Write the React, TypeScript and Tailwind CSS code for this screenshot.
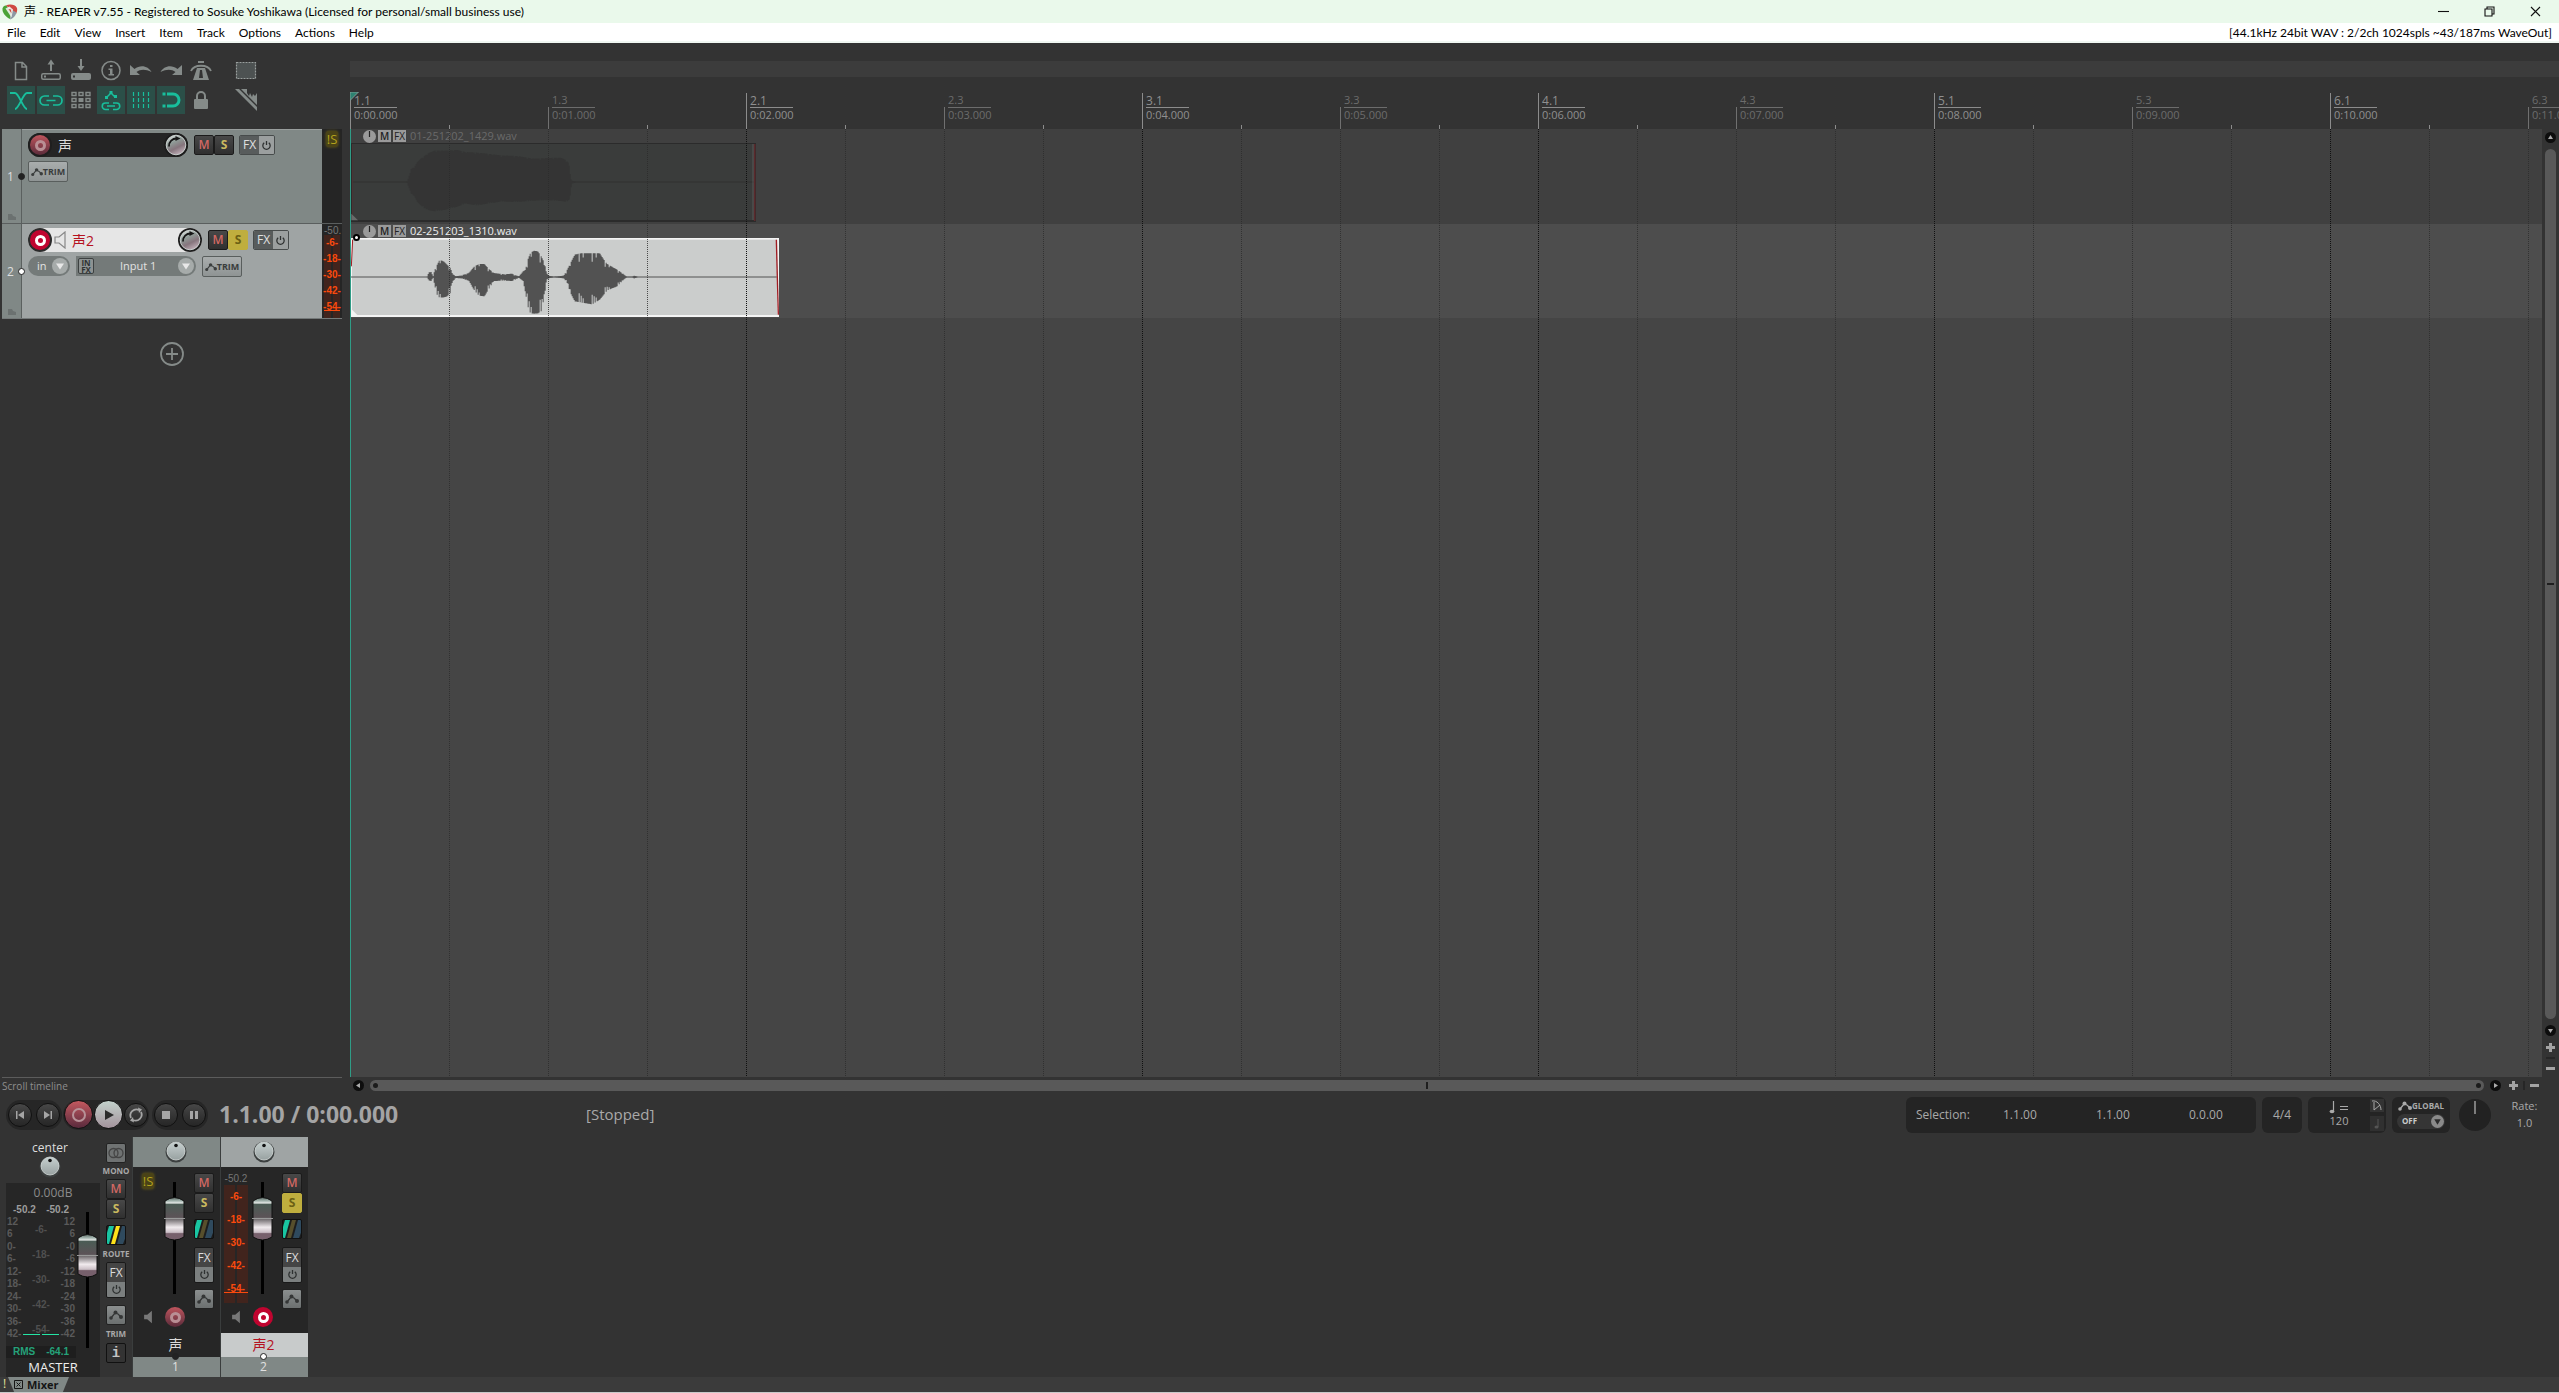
import clsx from 'clsx';
import type { ReactNode } from 'react';

const menus = ['File', 'Edit', 'View', 'Insert', 'Item', 'Track', 'Options', 'Actions', 'Help'];

// one entry per half-beat grid step
const gridSteps = Array.from({ length: 23 }, (_, i) => i);

type EnvelopePoint = [x: number, top: number, bottom: number];

const firstTake: EnvelopePoint[] = [
  [200, 306, 309], [206, 288, 326], [212, 268, 342], [222, 262, 350], [230, 248, 366],
  [240, 238, 376], [252, 229, 387], [265, 220, 392], [285, 212, 395], [310, 213, 391],
  [350, 211, 381], [375, 217, 372], [410, 219, 377], [440, 222, 372], [480, 227, 366],
  [530, 229, 367], [580, 237, 363], [620, 235, 362], [660, 234, 364], [674, 240, 366],
  [685, 250, 364], [690, 290, 345], [693, 303, 312], [704, 306, 309],
];

const secondTake: EnvelopePoint[] = [
  [260, 591, 593], [265, 578, 602], [272, 577, 604], [278, 590, 594], [283, 570, 620],
  [290, 555, 645], [297, 541, 654], [310, 545, 653], [320, 555, 650], [330, 565, 640],
  [335, 580, 610], [345, 590, 595], [360, 588, 596], [385, 580, 603], [400, 562, 630],
  [415, 553, 648], [432, 553, 650], [445, 568, 628], [460, 580, 604], [490, 584, 603],
  [515, 582, 604], [525, 587, 600], [535, 590, 594], [548, 575, 604], [555, 570, 640],
  [562, 540, 680], [570, 520, 701], [580, 513, 702], [592, 515, 701], [602, 530, 695],
  [612, 550, 650], [618, 580, 600], [625, 588, 596], [640, 591, 593], [670, 588, 596],
  [680, 570, 610], [690, 550, 640], [703, 525, 665], [720, 521, 668], [755, 521, 674],
  [778, 521, 660], [790, 540, 645], [800, 553, 632], [830, 570, 620], [850, 584, 600],
  [858, 591, 593], [875, 591, 593], [882, 588, 597], [890, 591, 593],
];

// every few columns a peak is pulled back towards the centre line
const wavePath = (points: EnvelopePoint[], center: number, jag: number) => {
  const top: string[] = [];
  const bottom: string[] = [];
  for (let x = points[0][0]; x <= points[points.length - 1][0]; x += 3) {
    const next = Math.max(1, points.findIndex((p) => p[0] >= x));
    const a = points[next - 1];
    const b = points[next];
    const t = (x - a[0]) / (b[0] - a[0]);
    const noise = (x * 7919) % 13;
    const pull = noise < 3 ? 1 - jag * (0.5 + noise / 4) : 1;
    const up = center - (center - (a[1] + (b[1] - a[1]) * t)) * (noise % 2 ? 1 : pull);
    const down = center + (a[2] + (b[2] - a[2]) * t - center) * pull;
    top.push(`${x},${up.toFixed(1)} ${x + 3},${up.toFixed(1)}`);
    bottom.unshift(`${x + 3},${down.toFixed(1)} ${x},${down.toFixed(1)}`);
  }
  return `M${top.join(' L')} L${bottom.join(' L')} Z`;
};

const toolbarTop = [
  {
    label: 'New project',
    icon: <path d="M8.500 5.500h7l4 4v13h-11z M15 6v4h4" fill="none" stroke="currentColor" strokeWidth="1.500" />,
  },
  {
    label: 'Open project',
    icon: (
      <>
        <path d="M14 14V6" fill="none" stroke="currentColor" strokeWidth="2" />
        <path d="M14 2.500l3.500 5h-7z" fill="currentColor" />
        <rect x="4.750" y="16.750" width="18.500" height="5.500" rx="1.500" fill="none" stroke="currentColor" strokeWidth="1.500" />
        <path d="M7 18.500h2v2H7z" fill="currentColor" />
      </>
    ),
  },
  {
    label: 'Save project',
    icon: (
      <>
        <path d="M14 2v8" fill="none" stroke="currentColor" strokeWidth="2" />
        <path d="M14 14l3.500-5h-7z" fill="currentColor" />
        <rect x="4" y="16" width="20" height="7" rx="2" fill="currentColor" />
        <path d="M6 18.500h2v2H6z" fill="#333" />
      </>
    ),
  },
  {
    label: 'Project settings',
    icon: (
      <>
        <circle cx="14" cy="13.500" r="9" fill="none" stroke="currentColor" strokeWidth="1.500" />
        <path d="M13 8h2.500v2H13zM11.500 11.500h4V17h1.500v1.500h-5.500V17h1.500v-4h-1.500z" fill="currentColor" />
      </>
    ),
  },
  {
    label: 'Undo',
    icon: <path d="M3 8v10h10l-3.500-3c4-3 9-3 15 0-3-6-11-8-17-3z" fill="currentColor" />,
  },
  {
    label: 'Redo',
    icon: <path d="M25 8v10H15l3.500-3c-4-3-9-3-15 0 3-6 11-8 17-3z" fill="currentColor" />,
  },
  {
    label: 'Metronome',
    icon: (
      <>
        <path d="M11 4h6v2h-6zM10 11h8l4 12H6z" fill="currentColor" />
        <path d="M4 14c3-7 17-7 20 0" fill="none" stroke="currentColor" strokeWidth="1.800" />
        <path d="M13 13h2l1 8h-4z" fill="#333" />
      </>
    ),
  },
];

const toolbarBottom = [
  {
    label: 'Auto-crossfade',
    active: true,
    icon: <path d="M3 7h5c4 0 8 16 12 16M25 7h-5c-4 0-8 16-12 16" fill="none" stroke="currentColor" strokeWidth="1.800" />,
  },
  {
    label: 'Item grouping',
    active: true,
    icon: (
      <path
        d="M12 10H7.500a4.500 4.500 0 0 0 0 9H12M16 10h4.500a4.500 4.500 0 0 1 0 9H16M9.500 14.500h9"
        fill="none"
        stroke="currentColor"
        strokeWidth="1.700"
      />
    ),
  },
  {
    label: 'Ripple editing',
    active: false,
    icon: (
      <>
        <path
          d="M5 6.500h4v3H5zM12 6.500h4v3h-4zM19 6.500h4v3h-4zM5 12.500h4v3H5zM19 12.500h4v3h-4zM5 18.500h4v3H5zM12 18.500h4v3h-4zM19 18.500h4v3h-4z"
          fill="none"
          stroke="currentColor"
          strokeWidth="1.400"
        />
        <path d="M11.500 12h5v4h-5z" fill="currentColor" />
      </>
    ),
  },
  {
    label: 'Envelopes move with items',
    active: true,
    icon: (
      <>
        <path d="M9 12l5-5 4 4" fill="none" stroke="currentColor" strokeWidth="1.500" />
        <path d="M8 10h3v3H8zM12.500 5h3v3h-3zM17 9h3v3h-3z" fill="currentColor" />
        <path
          d="M12 17H8.500a3 3 0 0 0 0 6.500H12M16 17h3.500a3 3 0 0 1 0 6.500H16M10 20h8"
          fill="none"
          stroke="currentColor"
          strokeWidth="1.600"
        />
      </>
    ),
  },
  {
    label: 'Grid lines',
    active: true,
    icon: (
      <path
        d="M6.500 6v17M11.500 6v17M16.500 6v17M21.500 6v17"
        fill="none"
        stroke="currentColor"
        strokeWidth="1.200"
        strokeDasharray="4 2"
      />
    ),
  },
  {
    label: 'Snap',
    active: true,
    icon: (
      <>
        <path d="M10 8h6a6 6 0 0 1 0 12h-6" fill="none" stroke="currentColor" strokeWidth="3" />
        <path d="M5.500 6.500h3v3h-3zM5.500 18.500h3v3h-3z" fill="currentColor" />
      </>
    ),
  },
  {
    label: 'Locking',
    active: false,
    icon: (
      <>
        <path d="M10 14v-4a4 4 0 0 1 8 0v4" fill="none" stroke="currentColor" strokeWidth="2" />
        <rect x="7" y="13" width="14" height="10" rx="1" fill="currentColor" />
      </>
    ),
  },
];

const Knob = ({ className }: { className?: string }) => (
  <svg viewBox="0 0 24 24" className={clsx('shrink-0', className)} aria-hidden="true">
    <defs>
      <linearGradient id="knob" x1="0.200" y1="0" x2="0.700" y2="1">
        <stop offset="0" stopColor="#dfe5e2" />
        <stop offset="0.350" stopColor="#8f9b97" />
        <stop offset="0.650" stopColor="#86757d" />
        <stop offset="1" stopColor="#c4b3bc" />
      </linearGradient>
    </defs>
    <circle cx="12" cy="12" r="12" fill="#1d1d1d" />
    <circle cx="12" cy="12" r="9.800" fill="url(#knob)" stroke="#d3d9d7" strokeWidth="0.900" />
    <path d="M5 13.500a7.500 7.500 0 0 1 8-8" fill="none" stroke="#161616" strokeWidth="1.800" />
    <path d="M11.500 3l5 2.500-5 2.500z" fill="#161616" />
  </svg>
);

const PanKnob = () => (
  <svg viewBox="0 0 22 24" className="h-6 w-[22px] shrink-0" aria-hidden="true">
    <defs>
      <linearGradient id="pan" x1="0" y1="0" x2="0" y2="1">
        <stop offset="0" stopColor="#c6d0cf" />
        <stop offset="1" stopColor="#98a1a1" />
      </linearGradient>
    </defs>
    <circle cx="11" cy="12" r="10.500" fill="#3c4040" />
    <circle cx="11" cy="11" r="9" fill="url(#pan)" stroke="#d6dcdb" strokeWidth="0.800" />
    <circle cx="11" cy="5.500" r="1.800" fill="#111" />
  </svg>
);

const RecordButton = ({ armed, className }: { armed?: boolean; className?: string }) => (
  <button
    type="button"
    aria-label="Record arm"
    className={clsx(
      'flex shrink-0 items-center justify-center rounded-full',
      armed ? 'border-[#2b2b2b] bg-[#c0042f]' : 'border-[#1f1f1f] bg-linear-to-b from-[#c0555d] to-[#5c2c3b]',
      className,
    )}
  >
    <span className={clsx('size-[11px] rounded-full border-[3px]', armed ? 'border-white' : 'border-[#b98f95]')} />
  </button>
);

const PowerIcon = () => (
  <svg viewBox="0 0 12 12" className="size-[11px]" aria-hidden="true">
    <path d="M3.500 3a4 4 0 1 0 5 0M6 1v4.500" fill="none" stroke="#2e3131" strokeWidth="1.400" />
  </svg>
);

const EnvelopeIcon = ({ className }: { className?: string }) => (
  <svg viewBox="0 0 14 10" className={clsx('h-[10px] shrink-0', className ?? 'w-[14px]')} aria-hidden="true">
    <path d="M2 8l4-5 3 1 3 3" fill="none" stroke="currentColor" strokeWidth="1.300" />
    <circle cx="2" cy="8" r="1.800" fill="currentColor" />
    <circle cx="6.500" cy="2.500" r="2" fill="currentColor" />
    <circle cx="12" cy="7" r="2" fill="currentColor" />
  </svg>
);

const SpeakerIcon = ({ outline }: { outline?: boolean }) => (
  <svg viewBox="0 0 12 18" className={outline ? 'h-[18px] w-3' : 'h-[14px] w-[10px]'} aria-hidden="true">
    <path
      d="M1 6h4l6-5v16l-6-5H1z"
      fill={outline ? 'none' : '#777'}
      stroke={outline ? '#888' : 'none'}
      strokeWidth="1.200"
    />
  </svg>
);

const MuteButton = () => (
  <button
    type="button"
    className="h-5 w-5 rounded-[2px] border border-[#1b1b1b] bg-linear-to-b from-[#484848] to-[#303030] text-center text-[12px] leading-4 font-semibold text-[#d26863]"
  >
    M
  </button>
);

const SoloButton = ({ active }: { active?: boolean }) => (
  <button
    type="button"
    className={clsx(
      'h-5 w-5 rounded-[2px] border text-center text-[12px] leading-4 font-bold',
      active
        ? 'border-[#bfae3e] bg-[#bfae3e] text-[#6b6014]'
        : 'border-[#1b1b1b] bg-linear-to-b from-[#484848] to-[#303030] text-[#c9b95f]',
    )}
  >
    S
  </button>
);

const TrimButton = () => (
  <button
    type="button"
    className="flex h-[21px] w-10 items-center justify-center rounded-[2px] border border-[#595e5d] bg-linear-to-b from-[#a9adad] to-[#8f9494] text-[#3a3d3d]"
  >
    <EnvelopeIcon className="w-3" />
    <span className="text-[9px] font-bold">TRIM</span>
  </button>
);

const FxPair = () => (
  <div className="flex h-5 w-9 overflow-hidden rounded-[2px] border border-[#474b4b]">
    <button type="button" className="w-[19px] bg-[#585c5c] text-[12px] leading-4 text-[#e0e0e0]">
      FX
    </button>
    <button type="button" aria-label="FX bypass" className="flex flex-1 items-center justify-center bg-[#9b9f9f]">
      <PowerIcon />
    </button>
  </div>
);

const DownArrow = () => (
  <svg viewBox="0 0 18 18" className="pointer-events-none absolute top-px right-px size-[18px]" aria-hidden="true">
    <circle cx="9" cy="9" r="8" fill="#a6abaa" />
    <path d="M5 6.500h8l-4 6z" fill="#e8e8e8" />
  </svg>
);

const Soloed = () => (
  <span className="block rounded-[3px] bg-[#4a4317] px-px text-[13px] leading-4 text-[#b3a21c] shadow-[0_0_3px_#6b6018]">
    !S
  </span>
);

const TrackIndex = ({ index, selected }: { index: number; selected?: boolean }) => (
  <div className="relative w-[20px] shrink-0 border-r border-[#5b605f] bg-[#808886]">
    <span className="absolute top-[40px] left-[5px] text-[12px] leading-4 text-[#dedede]">{index}</span>
    <span
      className={clsx(
        'absolute top-[44px] -right-[4px] z-10 size-[7px] rounded-full border border-[#222]',
        selected ? 'bg-white' : 'bg-[#222]',
      )}
    />
    <svg viewBox="0 0 8 6" className="absolute bottom-[3px] left-[6px] h-[6px] w-2" aria-hidden="true">
      <path d="M0 0h4l1 2 3 1v3H0z" fill="#6b7170" />
    </svg>
  </div>
);

const Toolbar = () => (
  <div className="flex h-[86px] gap-4 pt-[14px] pl-[7px]">
    <div className="grid auto-rows-[28px] grid-cols-[repeat(7,28px)] gap-x-[2px] gap-y-px text-[#858b89]">
      {[...toolbarTop, ...toolbarBottom].map((tool) => (
        <button
          key={tool.label}
          type="button"
          aria-label={tool.label}
          className={clsx('size-7', 'active' in tool && tool.active && 'bg-[#2b4f48] text-[#18bf9c]')}
        >
          <svg viewBox="0 0 28 28" className="size-7" aria-hidden="true">
            {tool.icon}
          </svg>
        </button>
      ))}
    </div>
    <div className="flex flex-col gap-px">
      <button type="button" aria-label="Marquee select" className="size-7">
        <svg viewBox="0 0 28 28" className="size-7" aria-hidden="true">
          <rect x="5.500" y="5.500" width="19" height="16" fill="#4d5252" stroke="#9a9f9e" strokeWidth="1.200" strokeDasharray="2 1" />
        </svg>
      </button>
      <button type="button" aria-label="Draw" className="size-7">
        <svg viewBox="0 0 28 28" className="size-7" aria-hidden="true">
          <path d="M4 3l22 22v-4L8 3z" fill="#858b89" />
          <path d="M10 3l16 16V7l-2 3-2-2-1 3-2-4-1 3-2-3V3z" fill="#858b89" />
        </svg>
      </button>
    </div>
  </div>
);

const TrackPanels = () => (
  <div className="ml-[2px] w-[340px]">
    <div className="flex h-[95px] border-b border-[#5a5e5e]">
      <TrackIndex index={1} />
      <div className="flex-1 border-t border-[#999e9d] bg-[#808886] pt-[3px] pl-[6px]">
        <div className="flex h-6 items-center">
          <div className="mr-[6px] flex h-6 w-40 items-center rounded-full bg-[#252525]">
            <RecordButton className="size-6 border-2" />
            <input
              aria-label="Track 1 name"
              defaultValue="声"
              className="ml-[6px] w-[106px] bg-transparent text-[14px] text-[#dcdcdc]"
            />
            <Knob className="size-6" />
          </div>
          <MuteButton />
          <SoloButton />
          <div className="ml-[5px]">
            <FxPair />
          </div>
        </div>
        <div className="mt-[4px]">
          <TrimButton />
        </div>
      </div>
      <div className="flex w-5 justify-center bg-[#252525] pt-[2px]">
        <div>
          <Soloed />
        </div>
      </div>
    </div>
    <div className="flex h-[95px] border-b border-[#747979]">
      <TrackIndex index={2} selected />
      <div className="flex-1 bg-[#9fa4a4] pt-[4px] pl-[6px]">
        <div className="flex h-6 items-center">
          <div className="mr-[6px] flex h-6 w-[174px] items-center rounded-full bg-[#e6e6e6]">
            <RecordButton armed className="size-6 border-2" />
            <button type="button" aria-label="Monitor" className="ml-[2px]">
              <SpeakerIcon outline />
            </button>
            <input
              aria-label="Track 2 name"
              defaultValue="声2"
              className="ml-[6px] w-[106px] bg-transparent text-[14px] text-[#b5121f]"
            />
            <Knob className="size-6" />
          </div>
          <MuteButton />
          <SoloButton active />
          <div className="ml-[5px]">
            <FxPair />
          </div>
        </div>
        <div className="mt-[4px] flex h-[21px]">
          <div className="relative h-5 w-[42px]">
            <select
              aria-label="Input mode"
              className="block h-5 w-full appearance-none rounded-full bg-[#747a79] pl-[9px] text-[11px] text-[#e2e2e2]"
            >
              <option>in</option>
            </select>
            <DownArrow />
          </div>
          <div className="relative ml-[6px] flex h-5 w-[120px] items-center rounded-l-[3px] rounded-r-full bg-[#747a79] pl-[2px]">
            <button
              type="button"
              className="flex h-4 w-4 flex-col items-center justify-center rounded-[2px] border border-[#3d4141] bg-[#8d9292] text-[8px] leading-[7px] font-bold text-[#2f3232]"
            >
              <span>IN</span>
              <span>FX</span>
            </button>
            <select
              aria-label="Record input"
              className="block h-5 flex-1 appearance-none pl-[26px] text-[11px] text-[#e2e2e2]"
            >
              <option>Input 1</option>
            </select>
            <DownArrow />
          </div>
          <div className="ml-[6px]">
            <TrimButton />
          </div>
        </div>
      </div>
      <div className="relative flex w-5 flex-col overflow-hidden bg-[#252525] font-['Liberation_Sans',sans-serif] text-[10px] text-[#fb4a0d]">
        <span className="h-[11px] pl-[2px] leading-[14px] text-[#777]">-50.</span>
        <div className="flex flex-1 justify-center gap-[2px]">
          <span className="w-[7px] bg-[#41241d]" />
          <span className="w-[7px] bg-[#41241d]" />
        </div>
        <div className="absolute inset-x-0 top-[11px] flex flex-col text-center font-bold">
          {['-6-', '-18-', '-30-', '-42-', '-54-'].map((db) => (
            <span key={db} className="h-4 leading-4">
              {db}
            </span>
          ))}
        </div>
        <div className="absolute inset-x-[2px] bottom-[7px] h-px bg-[#fb4a0d]" />
      </div>
    </div>
  </div>
);

const Ruler = () => (
  <div className="relative flex h-[52px] overflow-hidden">
    {gridSteps.map((step) => {
      const measure = Math.floor(step / 4) + 1;
      const isMeasure = step % 4 === 0;
      const isBeat = step % 2 === 0;
      return (
        <div key={step} className="flex w-[99px] shrink-0 items-end">
          <span
            className={clsx(
              'w-px shrink-0',
              isMeasure ? 'h-9 bg-[#8c8c8c]' : isBeat ? 'h-[22px] bg-[#707070]' : 'h-1 bg-[#8c8c8c]',
            )}
          />
          {isBeat && (
            <div className={clsx('ml-[3px] h-9 w-[43px]', isMeasure ? 'text-[#8f8f8f]' : 'text-[#6c6c6c]')}>
              <div
                className={clsx(
                  'h-[15px] border-b',
                  isMeasure
                    ? 'border-[#8c8c8c] text-[12px] leading-[16px]'
                    : 'border-[#6c6c6c] text-[11px] leading-[13px]',
                )}
              >
                {measure}.{isMeasure ? 1 : 3}
              </div>
              <div className="text-[11px] leading-[13px]">
                0:{String(step / 2).padStart(2, '0')}.000
              </div>
            </div>
          )}
        </div>
      );
    })}
    <svg viewBox="0 0 9 9" className="absolute top-[15px] left-0 size-[9px]" aria-hidden="true">
      <path d="M0 0h8.500L0 8.500z" fill="#2d8270" stroke="#8fa59f" strokeWidth="0.800" />
    </svg>
  </div>
);

const ItemLabel = ({ name, dimmed }: { name: string; dimmed?: boolean }) => (
  <div className="flex h-[14px] items-center gap-[2px] pl-3">
    <svg viewBox="0 0 13 13" className="size-[13px]" aria-hidden="true">
      <circle cx="6.500" cy="6.500" r="6.500" fill="#9a9a9a" />
      <path d="M6.500 1v6" stroke="#222" strokeWidth="1.200" />
    </svg>
    <button type="button" className="h-3 w-[13px] bg-[#9a9a9a] text-[10px] leading-3 font-semibold text-[#222]">
      M
    </button>
    <button type="button" className="h-3 w-[13px] bg-[#9a9a9a] text-[10px] leading-3 text-[#222]">
      FX
    </button>
    <span className={clsx('ml-[2px] text-[11px] leading-3', dimmed ? 'text-[#6a6a6a]' : 'text-[#eee]')}>{name}</span>
  </div>
);

const Arrange = () => (
  <div className="relative flex-1 overflow-hidden bg-[#454545]">
    <div className="h-[95px] bg-[#404040] pl-px">
      <ItemLabel name="01-251202_1429.wav" dimmed />
      <svg viewBox="33 190 1215 237" className="h-[79px] w-[405px]" aria-label="01-251202_1429.wav waveform">
        <rect x="33" y="190" width="1215" height="237" fill="#2b2b2b" />
        <rect x="36" y="193" width="1206" height="228" fill="#3a3c3b" />
        <path d="M36 307H1242" stroke="#313131" strokeWidth="3" />
        <path d={wavePath(firstTake, 308, 0.06)} fill="#343434" />
        <path d="M1244 193V424" stroke="#5b2a2d" strokeWidth="5" />
        <path d="M1239 193V421" stroke="#676767" strokeWidth="2" />
        <path d="M38 193V421" stroke="#4d3536" strokeWidth="3" />
        <path d="M34 402l20 20H34z" fill="#6a6a6a" />
      </svg>
    </div>
    <div className="relative h-[94px] bg-[#4d4d4d] pl-px">
      <ItemLabel name="02-251203_1310.wav" />
      <svg viewBox="33 475 1284 237" className="h-[79px] w-[428px]" aria-label="02-251203_1310.wav waveform">
        <rect x="33" y="475" width="1284" height="237" fill="#f4f4f4" />
        <rect x="36" y="480" width="1276" height="226" fill="#cbcdcc" />
        <path d="M33 592H1310" stroke="#525252" strokeWidth="3" />
        <path d={wavePath(secondTake, 592, 0.35)} fill="#525252" />
        <path d="M1309 480L1315 705" stroke="#a01c22" strokeWidth="4" fill="none" />
        <path d="M38 480L34 560" stroke="#a01c22" strokeWidth="3" fill="none" />
        <path d="M34 688l18 18H34z" fill="#f4f4f4" />
      </svg>
      <span className="absolute top-[10px] left-[3px] size-[7px] rounded-full border-2 border-black bg-white" />
    </div>
    <div className="pointer-events-none absolute inset-0 flex">
      {gridSteps.map((step) => (
        <div key={step} className="w-[99px] shrink-0">
          <div
            className={clsx(
              'h-full w-px',
              step % 4 === 0
                ? 'bg-[repeating-linear-gradient(to_bottom,#101010_0_1px,transparent_1px_2px)]'
                : 'bg-[repeating-linear-gradient(to_bottom,#2b2b2bcc_0_1px,transparent_1px_2px)]',
            )}
          />
        </div>
      ))}
    </div>
    <div className="absolute inset-y-0 left-0 w-px bg-[#2f9c86]" />
  </div>
);

const ScrollArrow = ({ label, d }: { label: string; d: string }) => (
  <button type="button" aria-label={label} className="size-[11px] shrink-0">
    <svg viewBox="0 0 11 11" className="size-[11px]" aria-hidden="true">
      <circle cx="5.500" cy="5.500" r="5.500" fill="#0d0d0d" />
      <path d={d} fill="#ababab" />
    </svg>
  </button>
);

const ZoomButton = ({ sign }: { sign: 'in' | 'out' }) => (
  <button type="button" aria-label={`Zoom ${sign}`} className="size-[9px] shrink-0">
    <svg viewBox="0 0 9 9" className="size-[9px]" aria-hidden="true">
      <path d={sign === 'in' ? 'M3 0h3v3h3v3H6v3H3V6H0V3h3z' : 'M0 3h9v3H0z'} fill="#a3a3a3" />
    </svg>
  </button>
);

const VerticalScroll = () => (
  <div className="flex w-[17px] flex-col items-center pt-[3px] pb-1">
    <ScrollArrow label="Scroll up" d="M5.500 3l2.500 4H3z" />
    <div className="mt-[6px] flex w-[11px] flex-1 items-center justify-center rounded-full bg-[#595959]">
      <span className="h-[2px] w-[7px] bg-[#1f1f1f]" />
    </div>
    <div className="mt-[6px] flex flex-col items-center">
      <ScrollArrow label="Scroll down" d="M5.500 8l2.500-4H3z" />
      <div className="mt-[7px] flex flex-col items-center gap-[5px]">
        <ZoomButton sign="in" />
        <span className="h-[2px] w-[9px] bg-[#262626]" />
        <ZoomButton sign="out" />
      </div>
    </div>
  </div>
);

const HorizontalScroll = () => (
  <div className="flex h-[15px] items-center pt-[2px] pr-5 pl-[3px]">
    <ScrollArrow label="Scroll left" d="M3 5.500l4-2.500v5z" />
    <div className="mx-[6px] flex h-[11px] flex-1 items-center justify-between rounded-full bg-[#595959] px-[3px]">
      <span className="size-[5px] rounded-full bg-[#1b1b1b]" />
      <span className="h-[7px] w-[2px] bg-[#1f1f1f]" />
      <span className="size-[5px] rounded-full bg-[#1b1b1b]" />
    </div>
    <ScrollArrow label="Scroll right" d="M8 5.500L4 3v5z" />
    <div className="ml-2 flex items-center gap-[5px]">
      <ZoomButton sign="in" />
      <span className="h-[9px] w-[2px] bg-[#262626]" />
      <ZoomButton sign="out" />
    </div>
  </div>
);

const TransportButton = ({ label, children, className }: { label: string; children: ReactNode; className?: string }) => (
  <button
    type="button"
    aria-label={label}
    className={clsx(
      'flex shrink-0 items-center justify-center rounded-full border border-[#111]',
      className ?? 'size-6 bg-linear-to-b from-[#474747] to-[#262626]',
    )}
  >
    <svg viewBox="0 0 16 16" className="size-4" aria-hidden="true">
      {children}
    </svg>
  </button>
);

const Transport = () => (
  <div className="flex h-[45px] items-center pr-5 pl-[6px] text-[#a9a9a9]">
    <div className="flex h-[30px] w-[56px] items-center justify-around rounded-full bg-[#262626]">
      <TransportButton label="Go to start">
        <path d="M4 4h1.500v8H4zM12 4v8L6 8z" fill="#a5a5a5" />
      </TransportButton>
      <TransportButton label="Go to end">
        <path d="M10.500 4H12v8h-1.500zM4 4v8l6-4z" fill="#a5a5a5" />
      </TransportButton>
    </div>
    <div className="ml-px flex h-[30px] items-center gap-px rounded-full bg-[#262626] px-px">
      <TransportButton label="Record" className="size-[29px] bg-linear-to-b from-[#c4595f] to-[#5a2a3c]">
        <circle cx="8" cy="8" r="6" fill="none" stroke="#b79298" strokeWidth="2" />
      </TransportButton>
      <TransportButton label="Play" className="size-[29px] bg-linear-to-b from-[#c3d2cc] to-[#a3939c]">
        <path d="M4 3v10l9-5z" fill="#2b2b2b" />
      </TransportButton>
      <TransportButton label="Repeat">
        <path d="M3 11a6 6 0 0 1 8-8M13 5a6 6 0 0 1-8 8" fill="none" stroke="#a5a5a5" strokeWidth="1.800" />
        <path d="M10 0.500l4 2-3 3.500zM6 15.500l-4-2 3-3.500z" fill="#a5a5a5" />
      </TransportButton>
    </div>
    <div className="ml-[3px] flex h-[30px] w-[56px] items-center justify-around rounded-full bg-[#262626]">
      <TransportButton label="Stop">
        <path d="M4 4h8v8H4z" fill="#a5a5a5" />
      </TransportButton>
      <TransportButton label="Pause">
        <path d="M4 4h3v8H4zM9 4h3v8H9z" fill="#a5a5a5" />
      </TransportButton>
    </div>
    <div className="ml-[11px] w-[367px] text-[23px] font-bold whitespace-nowrap text-[#a4a4a4]">1.1.00 / 0:00.000</div>
    <div className="text-[15px]">[Stopped]</div>
    <div className="ml-auto flex h-9 items-center gap-[6px] text-[12px]">
      <div className="flex h-9 w-[350px] items-center rounded-md bg-[#242424] pl-[10px]">
        <span className="w-[87px]">Selection:</span>
        <input aria-label="Selection start" defaultValue="1.1.00" className="w-[93px] bg-transparent" />
        <input aria-label="Selection end" defaultValue="1.1.00" className="w-[93px] bg-transparent" />
        <input aria-label="Selection length" defaultValue="0.0.00" className="w-16 bg-transparent" />
      </div>
      <input
        aria-label="Time signature"
        defaultValue="4/4"
        className="h-9 w-10 rounded-md bg-[#242424] text-center text-[12px]"
      />
      <div className="flex h-9 w-[78px] rounded-md bg-[#242424] pr-[2px]">
        <label className="flex flex-1 flex-col items-center pt-[3px]">
          <svg viewBox="0 0 20 14" className="h-[14px] w-5" aria-label="Quarter note equals">
            <path d="M4.500 1v10" stroke="#a9a9a9" strokeWidth="1.200" />
            <ellipse cx="3" cy="11.500" rx="2.400" ry="1.800" fill="#a9a9a9" />
            <path d="M11 6.500h8M11 9.500h8" stroke="#a9a9a9" strokeWidth="1" />
          </svg>
          <input aria-label="Tempo" defaultValue="120" className="h-4 w-10 bg-transparent text-center text-[11px]" />
        </label>
        <div className="flex flex-col gap-1 pt-[2px]">
          <button type="button" aria-label="Tap tempo" className="h-[13px] w-[14px] bg-[#333]">
            <svg viewBox="0 0 14 13" className="h-[13px] w-[14px]" aria-hidden="true">
              <path d="M4 3v8l6-5M2 2c5-1 9 4 9 9" fill="none" stroke="#a9a9a9" strokeWidth="1" />
            </svg>
          </button>
          <button type="button" aria-label="Beat unit" className="h-[15px] w-[14px] bg-[#303030]">
            <svg viewBox="0 0 14 15" className="h-[15px] w-[14px]" aria-hidden="true">
              <path d="M8 3v8" stroke="#555" strokeWidth="1" />
              <ellipse cx="6.500" cy="11" rx="2" ry="1.500" fill="#555" />
            </svg>
          </button>
        </div>
      </div>
      <div className="flex h-9 w-[58px] flex-col items-center rounded-md bg-[#242424] pt-[3px]">
        <div className="flex h-[13px] items-center">
          <EnvelopeIcon />
          <span className="text-[8px] font-bold">GLOBAL</span>
        </div>
        <div className="relative mt-px h-[15px] w-12">
          <select
            aria-label="Global automation override"
            className="block h-[15px] w-12 appearance-none rounded-full bg-[#353535] pl-[5px] text-[8px] font-bold text-[#ccc]"
          >
            <option>OFF</option>
          </select>
          <svg viewBox="0 0 12 12" className="pointer-events-none absolute top-px right-px size-[13px]" aria-hidden="true">
            <circle cx="6" cy="6" r="6" fill="#8a8a8a" />
            <path d="M3 4h6L6 9z" fill="#2b2b2b" />
          </svg>
        </div>
      </div>
      <svg viewBox="0 0 32 32" className="ml-[3px] size-8" aria-label="Playback rate">
        <circle cx="16" cy="16" r="16" fill="#222" />
        <path d="M16 2v13" stroke="#bbb" strokeWidth="1.200" />
      </svg>
      <label className="ml-[13px] flex w-[29px] flex-col items-center text-[11px] leading-4">
        Rate:
        <input defaultValue="1.0" className="h-[18px] w-[29px] bg-transparent text-center text-[11px]" />
      </label>
    </div>
  </div>
);

const Fader = ({ label, master }: { label: string; master?: boolean }) => (
  <div className={clsx('relative flex w-[21px] justify-center', master ? 'h-[136px]' : 'h-28')}>
    <span className="h-full w-[3px] bg-black" />
    <svg
      viewBox="0 0 21 44"
      className={clsx('absolute left-0 h-11 w-[21px]', master ? 'top-[22px]' : 'top-[15px]')}
      aria-hidden="true"
    >
      <defs>
        <linearGradient id="cap" x1="0" y1="0" x2="0" y2="1">
          <stop offset="0" stopColor="#5d6b66" />
          <stop offset="0.080" stopColor="#a3b5af" />
          <stop offset="0.130" stopColor="#e4e8e6" />
          <stop offset="0.160" stopColor="#4b5c55" />
          <stop offset="0.450" stopColor="#5b5357" />
          <stop offset="0.500" stopColor="#6b6669" />
          <stop offset="0.700" stopColor="#f1ebee" />
          <stop offset="0.820" stopColor="#cbbfc6" />
          <stop offset="0.850" stopColor="#77606c" />
          <stop offset="1" stopColor="#77606c" />
        </linearGradient>
      </defs>
      <path d="M1 4q9.500-7 19 0v36q-9.500 6-19 0z" fill="url(#cap)" stroke="#111" strokeWidth="1" />
      <path d="M0 21.500h21" stroke="#999" strokeWidth="1" />
    </svg>
    <input
      type="range"
      aria-label={label}
      defaultValue={65}
      className="absolute inset-0 h-full w-full opacity-0 [writing-mode:vertical-lr]"
    />
  </div>
);

const RouteButton = ({ bright }: { bright?: boolean }) => (
  <button
    type="button"
    aria-label="Routing"
    className="block h-5 w-5 overflow-hidden rounded-[2px] border border-[#111] bg-[#1d1d1d]"
  >
    <svg viewBox="0 0 18 18" className="h-[18px] w-[18px]" aria-hidden="true">
      <path d="M2 0h5L2 18H-1V10z" fill="#19c5a2" />
      <path d="M9 0h4L8 18H4z" fill={bright ? '#ffe21a' : '#574f2c'} />
      <path d="M15 0h4v10l-3 8h-6z" fill="#2f4a5e" />
    </svg>
  </button>
);

const MixerFx = () => (
  <div className="flex h-9 w-5 flex-col overflow-hidden rounded-[2px] border border-[#191919]">
    <button type="button" className="h-[19px] bg-[#454545] text-[12px] leading-[17px] font-normal text-[#dcdcdc]">
      FX
    </button>
    <button type="button" aria-label="FX bypass" className="flex flex-1 items-center justify-center bg-[#7b7f7f]">
      <PowerIcon />
    </button>
  </div>
);

const MixerTrim = () => (
  <button
    type="button"
    aria-label="Envelopes"
    className="flex h-5 w-5 items-center justify-center rounded-[2px] border border-[#222] bg-linear-to-b from-[#8b8f8f] to-[#6c7070] text-[#343636]"
  >
    <EnvelopeIcon />
  </button>
);

const masterScale = ['12', '6', '0-', '6-', '12-', '18-', '24-', '30-', '36-', '42-'];
const masterScaleRight = ['12', '6', '-0', '-6', '-12', '-18', '-24', '-30', '-36', '-42'];
const meterScale = ['-6-', '-18-', '-30-', '-42-', '-54-'];

const Master = () => (
  <div className="flex w-[132px] shrink-0 pl-[6px]">
    <div className="flex w-[94px] flex-col">
      <div className="flex h-[46px] flex-col items-center pt-[3px] pr-[6px]">
        <span className="text-[12px] leading-[15px] text-[#ddd]">center</span>
        <PanKnob />
      </div>
      <div className="flex flex-1 flex-col bg-[#262626]">
        <div className="h-5 text-center text-[12px] leading-[19px] text-[#8b8b8b]">0.00dB</div>
        <div className="flex h-[143px]">
          <div className="w-[70px] font-['Liberation_Sans',sans-serif]">
            <div className="flex h-[13px] justify-between px-[7px] text-[10px] leading-[13px] font-bold text-[#9d9d9d]">
              <span>-50.2</span>
              <span>-50.2</span>
            </div>
            <div className="relative flex h-[124px] justify-between px-px text-[10px] leading-3 font-bold text-[#5a5a5a]">
              <div className="flex flex-col justify-between">
                {masterScale.map((db) => (
                  <span key={db}>{db}</span>
                ))}
              </div>
              <div className="flex flex-col justify-between pt-2 pb-1 text-center text-[#505050]">
                {meterScale.map((db) => (
                  <span key={db}>{db}</span>
                ))}
              </div>
              <div className="flex flex-col justify-between text-right">
                {masterScaleRight.map((db) => (
                  <span key={db}>{db}</span>
                ))}
              </div>
              <div className="absolute inset-x-[17px] bottom-[5px] flex gap-[2px]">
                <span className="h-px flex-1 bg-[#24e5a5]" />
                <span className="h-px flex-1 bg-[#24e5a5]" />
              </div>
            </div>
          </div>
          <div className="ml-px pt-[9px]">
            <Fader label="Master volume" master />
          </div>
        </div>
        <div className="flex h-3 w-[70px] justify-between bg-[#1e1e1e] px-[7px] font-['Liberation_Sans',sans-serif] text-[10px] leading-3 font-bold text-[#25a27a]">
          <span>RMS</span>
          <span>-64.1</span>
        </div>
        <div className="flex-1 text-center text-[13px] leading-[19px] text-[#eee]">MASTER</div>
      </div>
    </div>
    <div className="flex w-8 flex-col items-center pt-[6px] text-[8px] leading-4 font-bold text-[#a8a8a8]">
      <button
        type="button"
        aria-label="Mono"
        className="flex h-5 w-5 items-center justify-center rounded-[2px] border border-[#222] bg-[#6f7272]"
      >
        <svg viewBox="0 0 16 12" className="h-3 w-4" aria-hidden="true">
          <circle cx="5.500" cy="6" r="4.500" fill="none" stroke="#444" strokeWidth="1.300" />
          <circle cx="10.500" cy="6" r="4.500" fill="none" stroke="#444" strokeWidth="1.300" />
        </svg>
      </button>
      <span>MONO</span>
      <MuteButton />
      <SoloButton />
      <div className="mt-[6px] h-5">
        <RouteButton bright />
      </div>
      <span className="leading-[17px]">ROUTE</span>
      <MixerFx />
      <div className="mt-[7px] h-5">
        <MixerTrim />
      </div>
      <span className="leading-[17px]">TRIM</span>
      <button
        type="button"
        aria-label="Track details"
        className="mt-px h-5 w-5 rounded-[2px] border border-[#111] bg-[#333] font-['Liberation_Mono',monospace] text-[14px] leading-4 font-bold text-[#c5c5c5]"
      >
        i
      </button>
    </div>
  </div>
);

const ChannelStrip = ({ index, name, armed }: { index: number; name: string; armed?: boolean }) => (
  <div className="flex w-[88px] shrink-0 flex-col border-l border-[#3a3d3d] bg-[#262626]">
    <div className={clsx('flex h-[30px] justify-center pt-[3px] pr-[2px]', armed ? 'bg-[#9fa4a4]' : 'bg-[#808886]')}>
      <PanKnob />
    </div>
    <div className="flex h-[166px]">
      <div className="w-[61px] pl-[3px]">
        <div className="flex h-[140px]">
          <div className="flex w-6 flex-col items-center font-['Liberation_Sans',sans-serif]">
            {armed ? (
              <>
                <span className="h-[18px] pt-[3px] text-[10px] leading-[18px] text-[#757575]">-50.2</span>
                <div className="relative flex h-[118px] w-6 gap-[2px]">
                  <span className="flex-1 bg-[#41241d]" />
                  <span className="flex-1 bg-[#41241d]" />
                  <div className="absolute inset-x-0 top-0 flex flex-col text-center text-[10px] leading-[23px] font-bold text-[#fb4a0d]">
                    {meterScale.map((db) => (
                      <span key={db}>{db}</span>
                    ))}
                  </div>
                  <div className="absolute inset-x-0 bottom-[10px] h-px bg-[#fb4a0d]" />
                </div>
              </>
            ) : (
              <div className="pt-[6px] font-['Open_Sans',sans-serif]">
                <Soloed />
              </div>
            )}
          </div>
          <div className="ml-1 pt-[15px]">
            <Fader label={`Volume ${index}`} />
          </div>
        </div>
        <div className="flex items-center pl-[7px]">
          <SpeakerIcon />
          <RecordButton armed={armed} className="ml-3 size-5" />
        </div>
      </div>
      <div className="flex flex-col pt-[6px]">
        <MuteButton />
        <SoloButton active={armed} />
        <div className="mt-[6px] h-5">
          <RouteButton />
        </div>
        <div className="mt-[8px]">
          <MixerFx />
        </div>
        <div className="mt-[6px]">
          <MixerTrim />
        </div>
      </div>
    </div>
    <div
      className={clsx(
        'relative h-6 pr-[2px] text-center text-[14px] leading-6',
        armed ? 'bg-[#c8cbcb] text-[#b5121f]' : 'text-[#dcdcdc]',
      )}
    >
      {name}
      <span
        className={clsx(
          'absolute -bottom-[3px] left-[39px] size-[7px] rounded-full border border-[#222]',
          armed ? 'bg-white' : 'bg-[#222]',
        )}
      />
    </div>
    <div className="h-5 bg-[#808886] pr-[2px] text-center text-[12px] leading-5 text-[#e0e0e0]">{index}</div>
  </div>
);

export default function App() {
  return (
    <div className="flex h-screen flex-col overflow-hidden bg-[#333] font-['Open_Sans','Noto_Sans_CJK_JP',sans-serif]">
      <header className="flex h-[23px] shrink-0 items-center bg-[#eaf9eb] font-['Lato','Noto_Sans_CJK_JP',sans-serif] text-[12px] text-black">
        <svg viewBox="0 0 16 16" className="ml-[2px] size-4" aria-hidden="true">
          <path d="M0.500 4.500C1 2 3 1 4.500 1.500L9 9l-1 6C4 13 0 9 0.500 4.500z" fill="#4aa336" />
          <path d="M4 1.500C7 0 13 0 15 4c0.500 2 0 4-1 6L7 4z" fill="#cf4a41" />
          <path d="M10 6l4.500 2.500C13.500 12 11 14.500 8 15.500z" fill="#8d97a3" />
          <path d="M3.500 4.500l4-2 3.500 3-1.500 8z" fill="#f0f3f0" opacity="0.900" />
          <path d="M6.500 5l2.500 0.500 0.500 4z" fill="#cf4a41" />
        </svg>
        <h1 className="ml-[6px]">声 - REAPER v7.55 - Registered to Sosuke Yoshikawa (Licensed for personal/small business use)</h1>
        <div className="ml-auto flex items-center gap-[35px] pr-[18px]">
          {[
            ['Minimize', 'M0 5.500h11'],
            ['Restore', 'M1 3h7v7H1zM3 3V1h7v7H8'],
            ['Close', 'M1 1l9 9M10 1l-9 9'],
          ].map(([label, d]) => (
            <button key={label} type="button" aria-label={label} className="size-[11px]">
              <svg viewBox="0 0 11 11" className="size-[11px]" aria-hidden="true">
                <path d={d} fill="none" stroke="#111" strokeWidth="1.100" />
              </svg>
            </button>
          ))}
        </div>
      </header>
      <nav className="flex h-5 shrink-0 items-center border-b-2 border-[#f0f7f2] bg-white px-[7px] pt-px font-['Lato',sans-serif] text-[12px] text-black">
        <div className="flex gap-[14px]">
          {menus.map((menu) => (
            <button key={menu} type="button">
              {menu}
            </button>
          ))}
        </div>
        <span className="ml-auto">[44.1kHz 24bit WAV : 2/2ch 1024spls ~43/187ms WaveOut]</span>
      </nav>

      <div className="flex min-h-0 flex-1">
        <aside className="flex w-[350px] shrink-0 flex-col">
          <Toolbar />
          <TrackPanels />
          <button type="button" aria-label="Add track" className="mt-[23px] ml-[160px] size-6">
            <svg viewBox="0 0 24 24" className="size-6" aria-hidden="true">
              <circle cx="12" cy="12" r="11" fill="none" stroke="#858b89" strokeWidth="1.800" />
              <path d="M12 6v12M6 12h12" stroke="#858b89" strokeWidth="1.800" />
            </svg>
          </button>
          <div className="mt-auto mr-2 ml-[2px] h-[15px] border-t border-[#5c5c5c] text-[10px] leading-[16px] text-[#8e8e8e]">
            Scroll timeline
          </div>
        </aside>
        <main className="flex min-w-0 flex-1 flex-col pt-[18px]">
          <div className="h-4 bg-[#3c3c3c]" />
          <Ruler />
          <div className="flex min-h-0 flex-1">
            <Arrange />
            <VerticalScroll />
          </div>
          <HorizontalScroll />
        </main>
      </div>

      <Transport />

      <section className="flex h-60 shrink-0">
        <Master />
        <ChannelStrip index={1} name="声" />
        <ChannelStrip index={2} name="声2" armed />
      </section>

      <footer className="flex h-4 shrink-0 border-b border-[#c9c9c9] bg-[#3b3b3b] text-[12px] leading-[14px]">
        <span className="w-2 pl-[3px] text-[#e8e39a]">!</span>
        <button
          type="button"
          className="flex w-[61px] items-center gap-1 bg-[#808886] pl-[6px] text-[11px] font-bold text-[#151515] [clip-path:polygon(0_0,100%_0,90%_100%,10%_100%)]"
        >
          <svg viewBox="0 0 9 9" className="size-[9px]" aria-hidden="true">
            <path d="M0.500 0.500h8v8h-8zM2.500 2.500l4 4M6.500 2.500l-4 4" fill="none" stroke="#151515" strokeWidth="1" />
          </svg>
          Mixer
        </button>
      </footer>
    </div>
  );
}
